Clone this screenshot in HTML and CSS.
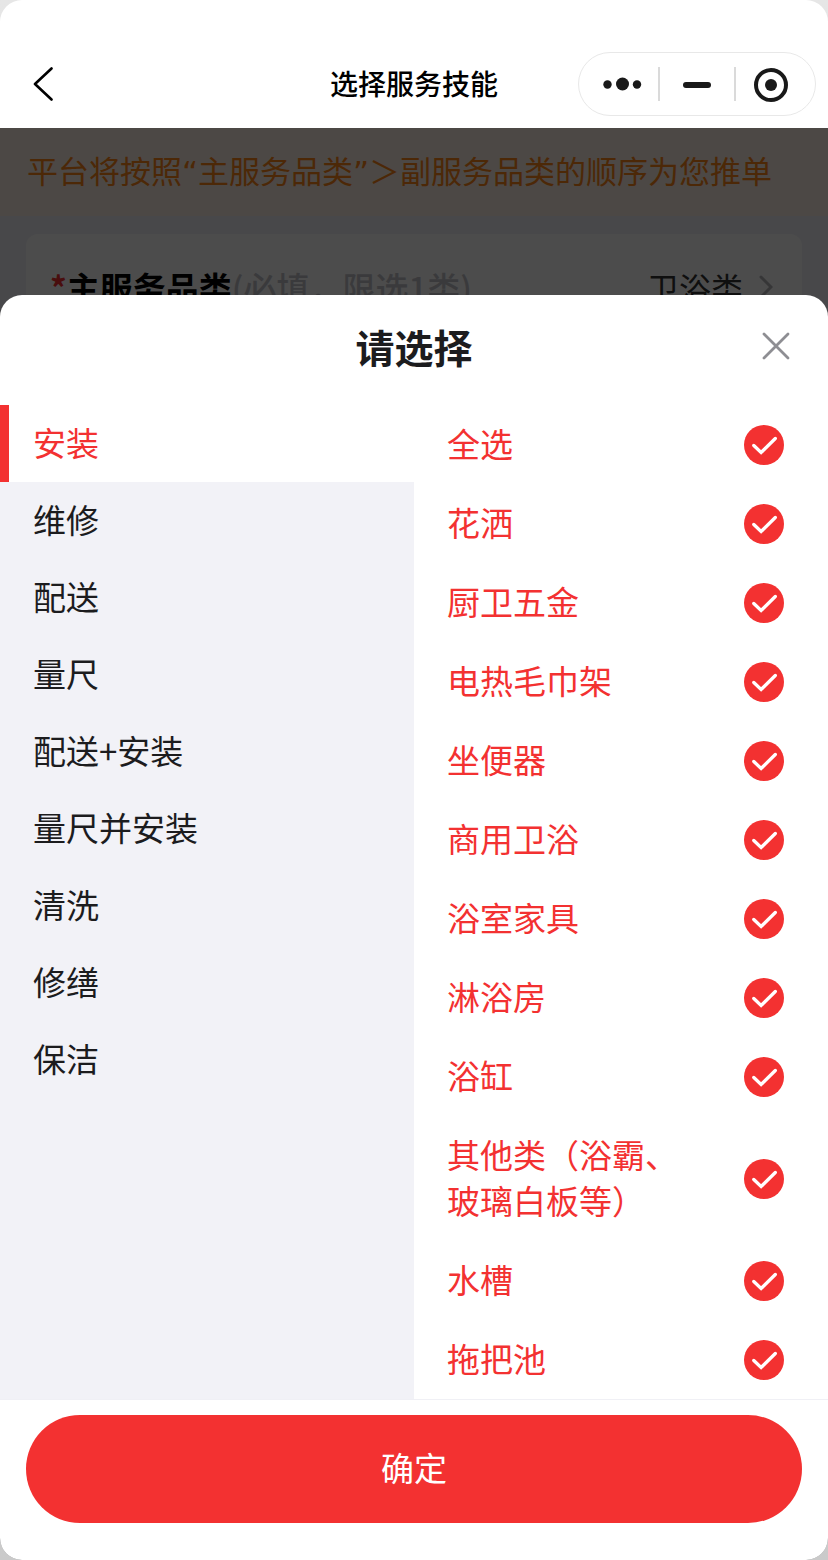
FILE: index.html
```html
<!DOCTYPE html>
<html lang="zh-CN">
<head>
    <meta charset="UTF-8">
    <meta name="viewport" content="width=device-width, initial-scale=1.0">
    <title>选择服务技能</title>
    <link rel="stylesheet" href="styles.css">
</head>
<body>
    <!-- 公用图标：红色圆形勾选 -->
    <svg class="icon-defs" width="0" height="0" aria-hidden="true">
        <symbol id="icon-check" viewBox="0 0 40 40">
            <circle cx="20" cy="20" r="20" fill="#f33131"/>
            <path d="M9.8 20.500l7.300 7L31.300 13.500" fill="none" stroke="#fff" stroke-width="3.300" stroke-linecap="round"/>
        </symbol>
    </svg>

    <div class="phone">
        <!-- 顶部导航栏 -->
        <header class="navbar">
            <button class="back-btn" type="button" aria-label="返回">
                <svg width="20" height="34" viewBox="0 0 20 34" fill="none" stroke="#000" stroke-width="2.6" stroke-linecap="round" stroke-linejoin="round">
                    <path d="M18.500 1.500L2 17l16.500 15.500"/>
                </svg>
            </button>
            <h1 class="navbar-title">选择服务技能</h1>
            <div class="capsule">
                <button type="button" aria-label="更多">
                    <svg width="44" height="34" viewBox="0 0 44 34" fill="#191919">
                        <circle cx="9.500" cy="17.500" r="4.200"/>
                        <circle cx="24.500" cy="17" r="6.500"/>
                        <circle cx="39" cy="17.500" r="4.200"/>
                    </svg>
                </button>
                <button type="button" aria-label="最小化">
                    <svg width="28" height="34" viewBox="0 0 28 34">
                        <rect y="15" width="28" height="6" rx="3" fill="#191919"/>
                    </svg>
                </button>
                <button type="button" aria-label="关闭小程序">
                    <svg width="38" height="34" viewBox="0 0 38 34" overflow="visible">
                        <circle cx="17" cy="18" r="15" fill="none" stroke="#191919" stroke-width="4"/>
                        <circle cx="17" cy="18" r="6" fill="#191919"/>
                    </svg>
                </button>
            </div>
        </header>

        <!-- 页面内容，被遮罩盖住 -->
        <main class="page">
            <p class="notice">平台将按照“主服务品类”＞副服务品类的顺序为您推单</p>
            <section class="card">
                <div class="card-row">
                    <span class="card-label"><i class="required">*</i>主服务品类<small>(必填，限选1类)</small></span>
                    <span class="card-value">卫浴类</span>
                    <svg width="14" height="26" viewBox="0 0 14 26" fill="none" stroke="#b4b4ba" stroke-width="3" stroke-linecap="round">
                        <path d="M2 3l10 10L2 23"/>
                    </svg>
                </div>
            </section>
            <div class="mask"></div>
        </main>

        <!-- 底部弹层 -->
        <section class="sheet" role="dialog" aria-labelledby="sheet-title">
            <header class="sheet-header">
                <h2 id="sheet-title">请选择</h2>
                <button class="close-btn" type="button" aria-label="关闭">
                    <svg width="28" height="28" viewBox="0 0 28 28" stroke="#8e8e93" stroke-width="2.8" stroke-linecap="round">
                        <path d="M2 2l24 24M26 2L2 26"/>
                    </svg>
                </button>
            </header>

            <div class="sheet-body">
                <!-- 左侧服务类型 -->
                <nav class="types">
                    <button class="type active" type="button">安装</button>
                    <button class="type" type="button">维修</button>
                    <button class="type" type="button">配送</button>
                    <button class="type" type="button">量尺</button>
                    <button class="type" type="button">配送+安装</button>
                    <button class="type" type="button">量尺并安装</button>
                    <button class="type" type="button">清洗</button>
                    <button class="type" type="button">修缮</button>
                    <button class="type" type="button">保洁</button>
                </nav>

                <!-- 右侧品类多选 -->
                <div class="options">
                    <label class="option"><span>全选</span><input type="checkbox" checked><svg><use href="#icon-check"/></svg></label>
                    <label class="option"><span>花洒</span><input type="checkbox" checked><svg><use href="#icon-check"/></svg></label>
                    <label class="option"><span>厨卫五金</span><input type="checkbox" checked><svg><use href="#icon-check"/></svg></label>
                    <label class="option"><span>电热毛巾架</span><input type="checkbox" checked><svg><use href="#icon-check"/></svg></label>
                    <label class="option"><span>坐便器</span><input type="checkbox" checked><svg><use href="#icon-check"/></svg></label>
                    <label class="option"><span>商用卫浴</span><input type="checkbox" checked><svg><use href="#icon-check"/></svg></label>
                    <label class="option"><span>浴室家具</span><input type="checkbox" checked><svg><use href="#icon-check"/></svg></label>
                    <label class="option"><span>淋浴房</span><input type="checkbox" checked><svg><use href="#icon-check"/></svg></label>
                    <label class="option"><span>浴缸</span><input type="checkbox" checked><svg><use href="#icon-check"/></svg></label>
                    <label class="option"><span>其他类（浴霸、玻璃白板等）</span><input type="checkbox" checked><svg><use href="#icon-check"/></svg></label>
                    <label class="option"><span>水槽</span><input type="checkbox" checked><svg><use href="#icon-check"/></svg></label>
                    <label class="option"><span>拖把池</span><input type="checkbox" checked><svg><use href="#icon-check"/></svg></label>
                </div>
            </div>

            <footer class="sheet-footer">
                <button class="confirm-btn" type="button">确定</button>
            </footer>
        </section>
    </div>
</body>
</html>
```
FILE: styles.css
```css
* {
    box-sizing: border-box;
}

body {
    margin: 0;
    background: linear-gradient(#e6e6e6, #cacaca);
    font-family: "Noto Sans CJK SC", sans-serif;
    font-size: 33px;
    line-height: 46px;
    color: #1c1c1e;
}

button {
    padding: 0;
    border: none;
    background: none;
    font: inherit;
    color: inherit;
    cursor: pointer;
}

svg {
    display: block;
}

.icon-defs {
    display: none;
}

.phone {
    position: relative;
    display: flex;
    flex-direction: column;
    min-height: 100vh;
    overflow: hidden;
    border-radius: 22px;
    background-color: #fff;
}

/* 顶部导航栏 */
.navbar {
    display: grid;
    grid-template-columns: 1fr auto 1fr;
    align-items: center;
    padding: 52px 12px 12px;
}

.back-btn {
    justify-self: start;
    padding: 0 21px;
}

.navbar-title {
    margin: 0;
    padding-bottom: 2px;
    font-size: 28px;
    line-height: 40px;
    font-weight: 500;
    color: #000;
}

.capsule {
    justify-self: end;
    display: flex;
    align-items: center;
    height: 64px;
    padding: 0 5px 0 3px;
    border: 1px solid #e8e8e8;
    border-radius: 32px;
}

.capsule button {
    display: flex;
    justify-content: center;
    width: 76px;
}

.capsule button + button {
    border-left: 2px solid #dadada;
}

/* 页面内容 */
.page {
    position: relative;
    flex: 1;
    background-color: #f2f2f7;
}

.notice {
    margin: 0;
    padding: 21px 27px;
    font-family: "DejaVu Sans", "Noto Sans CJK SC", sans-serif;
    font-size: 31px;
    background-color: #fff2e6;
    color: #ff8719;
}

.card {
    margin: 18px 26px;
    padding: 30px 24px;
    border-radius: 12px;
    background-color: #fff;
}

.card-row {
    display: flex;
    align-items: center;
    gap: 16px;
    padding-right: 5px;
}

.card-label {
    flex: 1;
    font-weight: bold;
    color: #000;
}

.card-label small {
    font-size: 33px;
    font-weight: 500;
    color: #c4c4ca;
}

.required {
    font-style: normal;
    color: #f33131;
}

.card-value {
    font-size: 32px;
    color: #333;
}

.mask {
    position: absolute;
    inset: 0;
    background-color: rgba(0, 0, 0, 0.7);
}

/* 底部弹层 */
.sheet {
    position: absolute;
    left: 0;
    right: 0;
    bottom: 0;
    overflow: hidden;
    border-radius: 22px 22px 0 0;
    background-color: #fff;
}

.sheet-header {
    display: grid;
    grid-template-columns: 1fr auto 1fr;
    align-items: center;
    padding: 23px 38px 31px;
}

.sheet-header h2 {
    grid-column: 2;
    margin: 0;
    font-size: 39px;
    line-height: 56px;
    font-weight: bold;
}

.close-btn {
    justify-self: end;
}

.sheet-body {
    display: grid;
    grid-template-columns: 1fr 1fr;
}

.types {
    display: flex;
    flex-direction: column;
    background-color: #f2f2f7;
}

.type {
    height: 77px;
    padding: 0 0 3px 24px;
    border-left: 9px solid transparent;
    text-align: left;
}

.type.active {
    border-left-color: #f33131;
    background-color: #fff;
    color: #f33131;
}

.option {
    display: grid;
    grid-template-columns: 1fr 40px;
    column-gap: 40px;
    align-items: center;
    padding: 15px 44px 14px 33px;
    color: #f33131;
    cursor: pointer;
}

.option span {
    padding-bottom: 4px;
}

/* 勾选框与图标叠放在同一格 */
.option input,
.option svg {
    grid-column: 2;
    grid-row: 1;
    width: 40px;
    height: 40px;
    margin: 0;
}

.option input {
    appearance: none;
}

.option svg {
    visibility: hidden;
    pointer-events: none;
}

.option input:checked + svg {
    visibility: visible;
}

.sheet-footer {
    padding: 15px 26px 37px;
    border-top: 1px solid #f0f0f5;
}

.confirm-btn {
    width: 100%;
    height: 108px;
    padding-bottom: 4px;
    border-radius: 54px;
    background-color: #f33131;
    color: #fff;
}
```
